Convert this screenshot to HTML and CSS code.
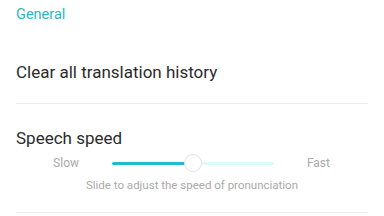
FILE: index.html
```html
<!DOCTYPE html>
<html lang="en">
<head>
    <meta charset="UTF-8">
    <title>Settings</title>
    <link rel="stylesheet" href="styles.css">
</head>
<body>
    <!-- General section -->
    <div class="section-title">General</div>

    <div class="item">
        <div class="item-title">Clear all translation history</div>
    </div>

    <div class="item speed">
        <div class="item-title">Speech speed</div>
        <div class="slider-row">
            <span class="slider-label">Slow</span>
            <div class="slider">
                <div class="slider-fill"></div>
                <div class="slider-thumb"></div>
                <div class="slider-rest"></div>
            </div>
            <span class="slider-label">Fast</span>
        </div>
        <div class="hint">Slide to adjust the speed of pronunciation</div>
    </div>
</body>
</html>
```

FILE: styles.css
```css
body {
    margin: 0;
    background-color: #fff;
    font-family: Roboto, "Noto Sans", sans-serif;
    color: #333;
}
.section-title {
    color: #2cb5c4;
    font-size: 14.5px;
    line-height: 16px;
    padding: 7px 16px 0;
    height: 29px;
}
.item {
    margin: 0 16px;
    border-bottom: 1px solid #eeeeee;
}
.item-title {
    font-size: 17px;
    line-height: 20px;
    color: #2b2b2b;
    padding: 26px 0 21px;
}
.speed .item-title {
    padding: 24px 0 5px;
}
.slider-row {
    display: flex;
    align-items: center;
    height: 20px;
}
.slider-label {
    font-size: 12px;
    color: #aaa;
}
.slider-label:first-child {
    width: 63px;
    text-align: right;
    padding-right: 33px;
}
.slider-label:last-child {
    width: 56px;
    text-align: right;
}
.slider {
    display: flex;
    align-items: center;
    width: 162px;
}
.slider-fill {
    width: 73px;
    height: 3px;
    border-radius: 2px;
    background-color: #1fbccb;
}
.slider-thumb {
    width: 18px;
    height: 18px;
    border-radius: 50%;
    border: 1px solid #e2e2e2;
    background-color: #fff;
    box-sizing: border-box;
    margin: 0 0 0 -1px;
}
.slider-rest {
    flex: 1;
    height: 3px;
    border-radius: 2px;
    background-color: #dcfafa;
}
.hint {
    font-size: 11.5px;
    line-height: 16px;
    color: #aaa;
    text-align: center;
    padding: 4px 0 19px;
    margin-left: -16px;
    margin-right: -16px;
}
```
